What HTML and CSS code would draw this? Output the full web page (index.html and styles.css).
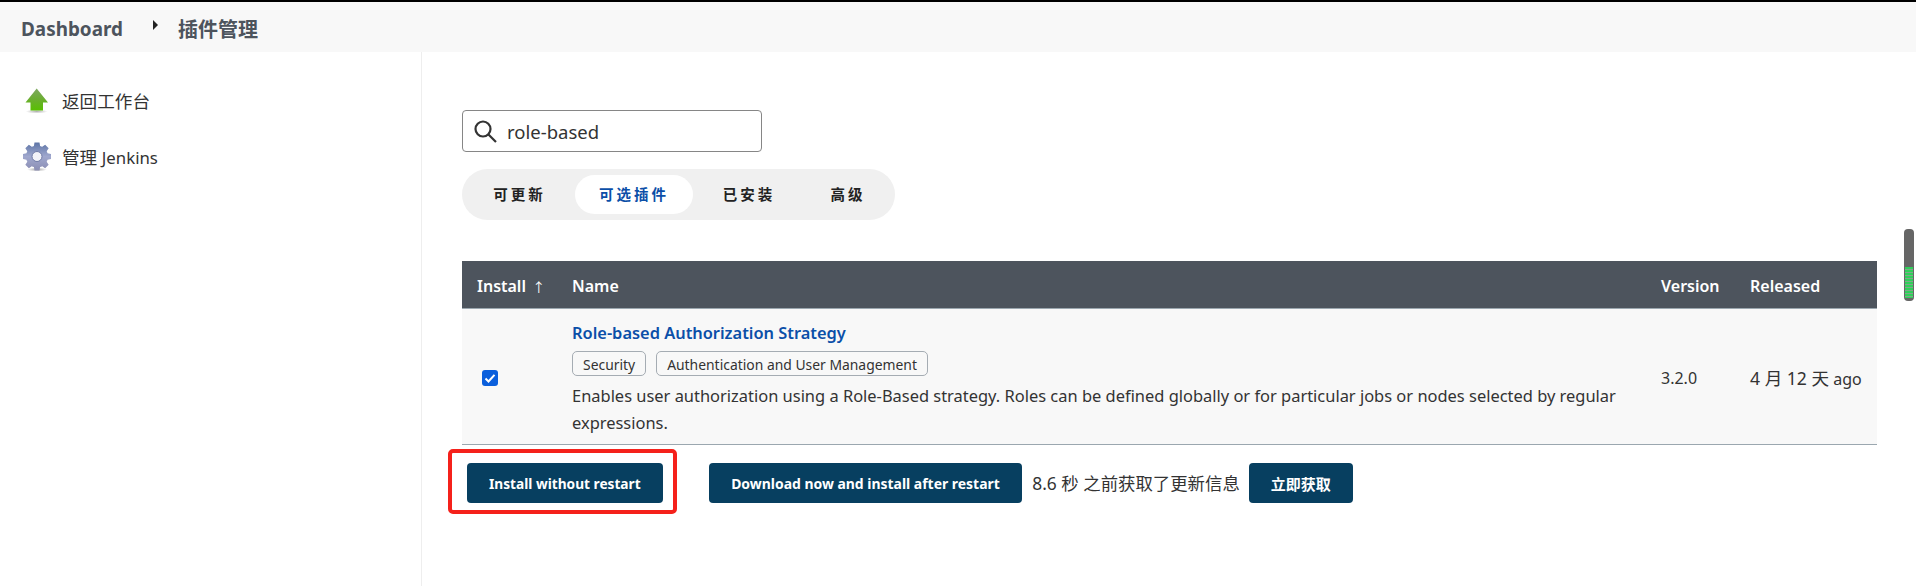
FILE: index.html
```html
<!DOCTYPE html>
<html lang="zh">
<head>
<meta charset="utf-8">
<title>插件管理</title>
<link rel="stylesheet" href="styles.css">
</head>
<body>
<header class="crumbs">
  <a class="crumb crumb-en">Dashboard</a>
  <svg class="crumb-sep" width="5" height="10" viewBox="0 0 5 10"><path d="M0 0L5 5L0 10Z" fill="#222"/></svg>
  <a class="crumb crumb-zh">插件管理</a>
</header>
<div class="layout">
  <aside class="side">
    <a class="side-item">
      <span class="side-icon">
        <svg width="30" height="30" viewBox="0 0 30 30">
          <defs>
            <linearGradient id="ar" x1="0" y1="0" x2="0" y2="1"><stop offset="0" stop-color="#7fa862"/><stop offset="0.5" stop-color="#6bae30"/><stop offset="1" stop-color="#58c000"/></linearGradient>
            <radialGradient id="sh"><stop offset="0" stop-color="#000" stop-opacity=".3"/><stop offset="1" stop-color="#000" stop-opacity="0"/></radialGradient>
          </defs>
          <ellipse cx="14.700" cy="26.500" rx="11" ry="2" fill="url(#sh)"/>
          <path d="M14.700 3.500L26 17.500H21V25.500H8.500V17.500H3.500Z" fill="url(#ar)"/>
        </svg>
      </span>
      <span>返回工作台</span>
    </a>
    <a class="side-item">
      <span class="side-icon">
        <svg width="30" height="30" viewBox="0 0 30 30">
          <defs>
            <linearGradient id="ge" x1="0" y1="0" x2="0" y2="1"><stop offset="0" stop-color="#5a72a4"/><stop offset="0.5" stop-color="#a0a8ce"/><stop offset="1" stop-color="#8a8cb2"/></linearGradient>
            <radialGradient id="sh2"><stop offset="0" stop-color="#000" stop-opacity=".35"/><stop offset="1" stop-color="#000" stop-opacity="0"/></radialGradient>
            <clipPath id="gear">
              <circle cx="15" cy="14.500" r="11"/>
              <path d="M12.500 0.500H17.500L18.500 6H11.500Z"/>
              <path d="M12.500 0.500H17.500L18.500 6H11.500Z" transform="rotate(45 15 14.500)"/>
              <path d="M12.500 0.500H17.500L18.500 6H11.500Z" transform="rotate(90 15 14.500)"/>
              <path d="M12.500 0.500H17.500L18.500 6H11.500Z" transform="rotate(135 15 14.500)"/>
              <path d="M12.500 0.500H17.500L18.500 6H11.500Z" transform="rotate(180 15 14.500)"/>
              <path d="M12.500 0.500H17.500L18.500 6H11.500Z" transform="rotate(225 15 14.500)"/>
              <path d="M12.500 0.500H17.500L18.500 6H11.500Z" transform="rotate(270 15 14.500)"/>
              <path d="M12.500 0.500H17.500L18.500 6H11.500Z" transform="rotate(315 15 14.500)"/>
            </clipPath>
          </defs>
          <ellipse cx="15" cy="27.500" rx="10" ry="2" fill="url(#sh2)"/>
          <rect width="30" height="29" fill="url(#ge)" clip-path="url(#gear)"/>
          <circle cx="15" cy="14.500" r="5" fill="#f2f2f8" stroke="#6f7aa6"/>
        </svg>
      </span>
      <span class="side-label-up">管理 <span class="latin">Jenkins</span></span>
    </a>
  </aside>
  <main class="content">
    <div class="search">
      <svg width="24" height="24" viewBox="0 0 24 24"><circle cx="10" cy="10" r="7.500" fill="none" stroke="#333" stroke-width="2.200"/><path d="M15.500 15.500L23 23" stroke="#333" stroke-width="2.200" fill="none"/></svg>
      <span>role-based</span>
    </div>
    <nav class="tabs">
      <a class="tab tab-a">可更新</a>
      <a class="tab tab-b active">可选插件</a>
      <a class="tab tab-c">已安装</a>
      <a class="tab tab-d">高级</a>
    </nav>
    <table class="plugins">
      <colgroup><col class="c1"><col class="c2"><col class="c3"><col class="c4"></colgroup>
      <thead>
        <tr><th>Install&nbsp; <span class="sort">↑</span></th><th>Name</th><th>Version</th><th>Released</th></tr>
      </thead>
      <tbody>
        <tr>
          <td><span class="check"><svg width="16" height="16" viewBox="0 0 16 16"><path d="M3.500 8.500L6.500 11.500L12.500 4.800" fill="none" stroke="#fff" stroke-width="2"/></svg></span></td>
          <td class="name-cell">
            <a class="title">Role-based Authorization Strategy</a>
            <div class="tags"><span class="tag">Security</span><span class="tag">Authentication and User Management</span></div>
            <div class="desc">Enables user authorization using a Role-Based strategy. Roles can be defined globally or for particular jobs or nodes selected by regular expressions.</div>
          </td>
          <td>3.2.0</td>
          <td><span class="zh">4 月 12 天</span> ago</td>
        </tr>
      </tbody>
    </table>
    <div class="actions">
      <button class="btn btn-first">Install without restart</button>
      <button class="btn btn-dl">Download now and install after restart</button>
      <span class="status">8.6 秒 之前获取了更新信息</span>
      <button class="btn btn-cjk">立即获取</button>
      <span class="mark"></span>
    </div>
  </main>
</div>
<div class="widget"><span class="widget-fill"></span></div>
</body>
</html>
```
FILE: styles.css
```css
* { box-sizing: border-box; }
html, body { height: 100%; }
body {
  margin: 0;
  border-top: 2px solid #000;
  background: #fff;
  color: #333;
  font-family: "Noto Sans", "Noto Sans CJK SC", sans-serif;
  font-size: 16px;
  overflow: hidden;
  display: flex;
  flex-direction: column;
}
.crumbs {
  height: 50px;
  flex: none;
  background: #f8f8f8;
  display: flex;
  align-items: center;
  padding: 3px 0 0 21px;
  color: #4d545d;
  font-weight: 700;
}
.crumb-en { font-size: 18.900px; }
.crumb-zh { font-size: 20px; }
.crumb-sep { margin: -8px 20px 0 30px; }
.layout { flex: 1; display: flex; }
.side {
  width: 422px;
  flex: none;
  border-right: 1px solid #eee;
  padding-top: 33px;
}
.side-item {
  display: flex;
  align-items: center;
  gap: 10px;
  height: 30px;
  margin-bottom: 27px;
  padding-left: 22px;
  font-size: 17.600px;
  color: #333;
}
.side-label-up { padding-bottom: 2px; }
.latin { font-size: 16.800px; }
.side-icon { width: 30px; height: 30px; flex: none; }
.side-icon svg { display: block; }
.content { flex: 1; padding: 58px 39px 0 40px; min-width: 0; position: relative; }
.search {
  width: 300px;
  height: 42px;
  border: 1px solid #868686;
  border-radius: 4px;
  display: flex;
  align-items: center;
  padding-left: 10px;
  gap: 10px;
  font-size: 18.500px;
}
.tabs {
  width: 433px;
  height: 51px;
  margin-top: 17px;
  border-radius: 26px;
  background: #f0f0f0;
  display: flex;
  align-items: center;
  font-size: 14.500px;
  font-weight: 700;
  letter-spacing: 3px;
  color: #222;
}
.tab { height: 39px; line-height: 39px; text-align: center; border-radius: 20px; }
.tab-a { margin-left: 6px; width: 107px; padding-right: 4px; }
.tab-b { width: 118px; }
.tab-c { width: 107px; padding-left: 5px; }
.tab-d { width: 88px; padding-left: 8px; }
.tab.active { background: #fff; color: #0b4fa8; }
.plugins {
  width: 100%;
  margin-top: 41px;
  border-collapse: collapse;
  table-layout: fixed;
}
.c1 { width: 95px; }
.c3 { width: 89px; }
.c4 { width: 142px; }
.plugins th {
  height: 47px;
  background: #4d545d;
  color: #fff;
  font-size: 16px;
  font-weight: 600;
  text-align: left;
  padding: 3px 0 0 15px;
  border-bottom: 1px solid #9ba7af;
}
.sort { font-size: 13px; font-weight: 400; margin-left: -2px; }
.plugins td {
  background: #f8f8f8;
  padding: 5px 15px 0;
  border-bottom: 1px solid #9ba7af;
  vertical-align: middle;
  line-height: 27px;
}
.plugins td.name-cell { padding: 12px 15px 8px; font-size: 16.450px; }
.zh { font-size: 17.600px; }
.check {
  display: block;
  width: 16px;
  height: 16px;
  margin: -2px 0 0 5px;
  border-radius: 3px;
  background: #0b5fdc;
}
.check svg { display: block; }
.title { display: block; color: #0b4fa8; font-weight: 600; font-size: 16.400px; line-height: 24px; }
.tags { display: flex; gap: 10px; margin: 6px 0 6px; }
.tag {
  height: 25px;
  line-height: 25px;
  padding: 0 10px;
  border: 1px solid #a5acb3;
  border-radius: 5px;
  font-size: 13.900px;
}
.actions {
  position: relative;
  display: flex;
  align-items: center;
  margin-top: 18px;
  padding-left: 5px;
  height: 40px;
}
.btn {
  height: 40px;
  padding: 2px 22px 0;
  border: 0;
  border-radius: 4px;
  background: #073f60;
  color: #fff;
  font: 700 13.700px "Noto Sans", "Noto Sans CJK SC", sans-serif;
}
.btn-first { margin-right: 46px; }
.btn-dl { font-size: 13.950px; padding: 2px 22.500px 0; }
.btn-cjk { font-size: 15px; }
.status { margin: 0 9px 0 10px; font-size: 17.400px; }
.mark {
  position: absolute;
  left: -14px;
  top: -14px;
  width: 229px;
  height: 65px;
  border: 4px solid #f5211b;
  border-radius: 5px;
}
.widget {
  position: absolute;
  left: 1904px;
  top: 229px;
  width: 10px;
  height: 72px;
  border-radius: 4px;
  background: #666;
}
.widget-fill {
  position: absolute;
  left: 1px;
  right: 1px;
  top: 38px;
  bottom: 3px;
  background: repeating-linear-gradient(#2fd05a 0 2px, #7fa88a 2px 3px);
}
```
